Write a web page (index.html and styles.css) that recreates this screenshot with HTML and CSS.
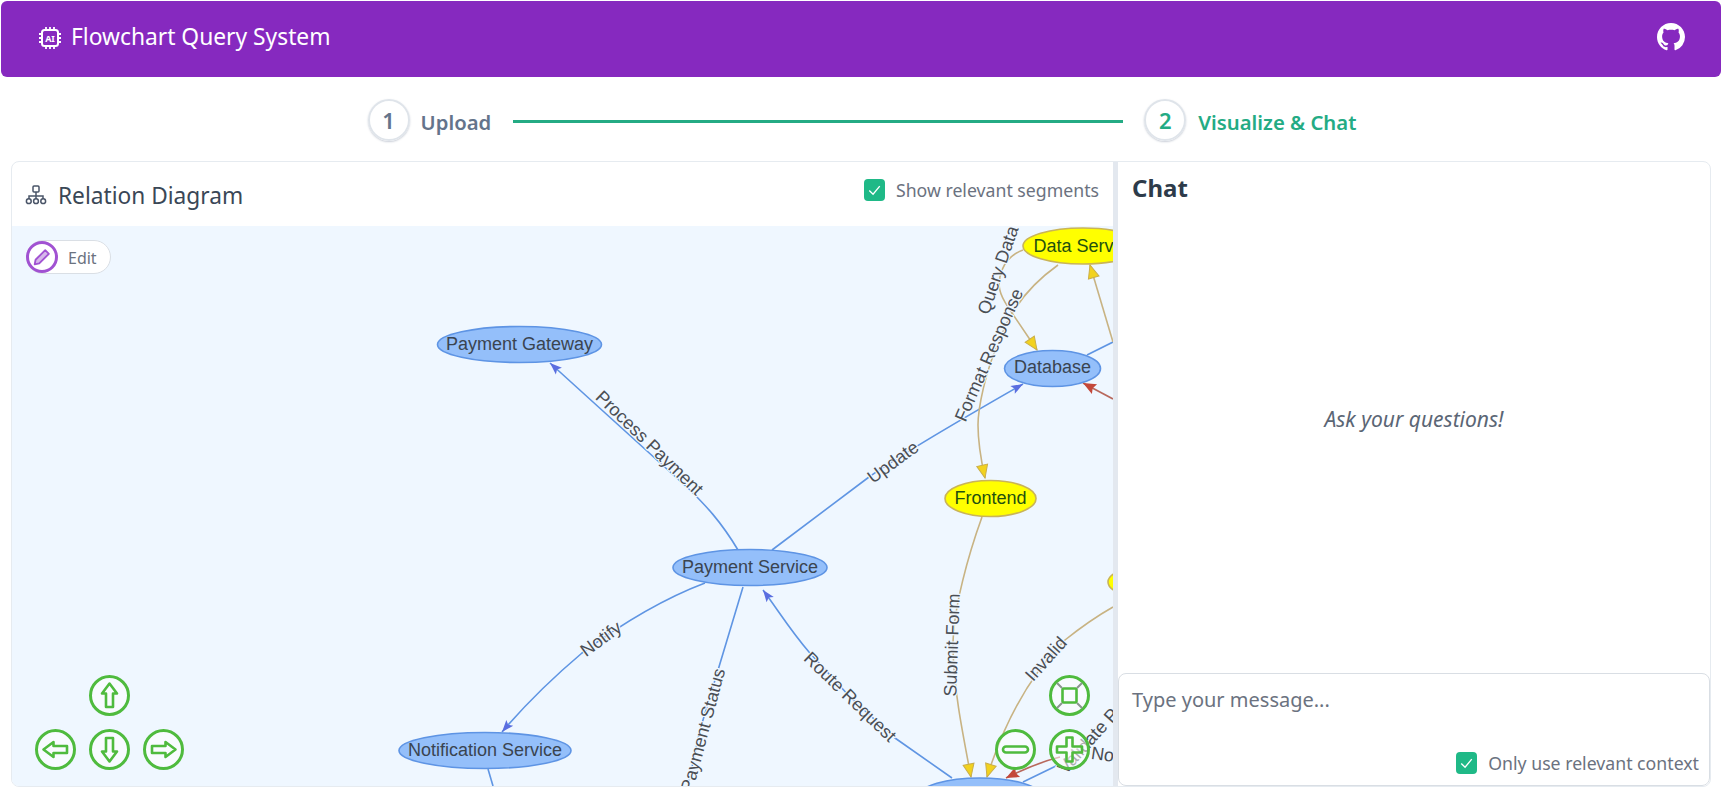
FILE: index.html
```html
<!DOCTYPE html>
<html lang="en">
<head>
<meta charset="utf-8">
<title>Flowchart Query System</title>
<link rel="stylesheet" href="styles.css">
</head>
<body>
<svg class="defs" width="0" height="0" aria-hidden="true">
  <defs>
    <marker id="head-blue" markerUnits="userSpaceOnUse" markerWidth="16" markerHeight="12" refX="14" refY="6" orient="auto"><path d="M2 1.5L14 6L2 10.5L4.5 6Z" fill="#5a6ee0"/></marker>
    <marker id="head-yellow" markerUnits="userSpaceOnUse" markerWidth="18" markerHeight="16" refX="16" refY="8" orient="auto"><path d="M3 2.5L16 8L3 13.5Z" fill="#f2d21e" stroke="#c9ae4a" stroke-width="1"/></marker>
    <marker id="head-red" markerUnits="userSpaceOnUse" markerWidth="16" markerHeight="14" refX="14" refY="7" orient="auto"><path d="M1 1.5L14 7L1 12.5L3 7Z" fill="#c4483a"/></marker>
    <symbol id="nav-arrow" viewBox="0 0 41 41">
      <circle class="nav-ring" cx="20.5" cy="20.5" r="19"/>
      <path class="nav-glyph" d="M20.5 8.5L28 18.5H24V32H17V18.5H13Z"/>
    </symbol>
  </defs>
</svg>

<header class="app-header">
  <div class="brand">
    <svg class="chip" viewBox="0 0 24 24" aria-hidden="true">
      <rect x="4" y="4" width="16" height="16" rx="2.5" fill="none" stroke="#fff" stroke-width="2"/>
      <path d="M8 1v3M12 1v3M16 1v3M8 20v3M12 20v3M16 20v3M1 8h3M1 12h3M1 16h3M20 8h3M20 12h3M20 16h3" stroke="#fff" stroke-width="1.8" fill="none"/>
      <text x="12" y="15.6" text-anchor="middle" class="chip-text">AI</text>
    </svg>
    <span class="brand-name">Flowchart Query System</span>
  </div>
  <svg class="github" viewBox="0 0 16 16" aria-hidden="true"><path fill="#fff" d="M8 0C3.58 0 0 3.58 0 8c0 3.54 2.29 6.53 5.47 7.59.4.07.55-.17.55-.38 0-.19-.01-.82-.01-1.49-2.01.37-2.53-.49-2.69-.94-.09-.23-.48-.94-.82-1.13-.28-.15-.68-.52-.01-.53.63-.01 1.08.58 1.23.82.72 1.21 1.87.87 2.33.66.07-.52.28-.87.51-1.07-1.78-.2-3.64-.89-3.64-3.95 0-.87.31-1.59.82-2.15-.08-.2-.36-1.02.08-2.12 0 0 .67-.21 2.2.82.64-.18 1.32-.27 2-.27.68 0 1.36.09 2 .27 1.53-1.04 2.2-.82 2.2-.82.44 1.1.16 1.92.08 2.12.51.56.82 1.27.82 2.15 0 3.07-1.87 3.75-3.65 3.95.29.25.54.73.54 1.48 0 1.07-.01 1.93-.01 2.2 0 .21.15.46.55.38A8.013 8.013 0 0016 8c0-4.42-3.58-8-8-8z"/></svg>
</header>

<nav class="stepper">
  <span class="step-num">1</span>
  <span class="step-label step-first">Upload</span>
  <span class="step-line"></span>
  <span class="step-num step-active">2</span>
  <span class="step-label step-active">Visualize &amp; Chat</span>
</nav>

<main class="workspace">
  <section class="diagram-panel">
    <div class="panel-head">
      <h2 class="panel-title">
        <svg class="sitemap" viewBox="0 0 22 20" aria-hidden="true">
          <rect x="8" y="1" width="6" height="6" rx="1"/>
          <path d="M11 7v4M4 14v-3h14v3M11 11v3"/>
          <circle cx="3.8" cy="16.2" r="2.4"/><circle cx="11" cy="16.2" r="2.4"/><circle cx="18.2" cy="16.2" r="2.4"/>
        </svg>
        Relation Diagram
      </h2>
      <label class="check-row">
        <span class="check-box"><svg viewBox="0 0 22 22" aria-hidden="true"><path d="M5.5 11.5l4 4 7-8.5"/></svg></span>
        Show relevant segments
      </label>
    </div>
    <div class="canvas">
      <svg class="graph" viewBox="0 0 1101 560" aria-label="Relation diagram">
        <g transform="translate(-12 -226)">
          <g class="edge edge-blue">
            <path marker-end="url(#head-blue)" d="M738 550C720 520 705 505 690 490L550 363"/>
            <path marker-end="url(#head-blue)" d="M772 550L869 477C900 455 960 420 1023 384"/>
            <path d="M1087 355L1113 342"/>
            <path marker-end="url(#head-blue)" d="M705 583C660 600 620 625 582 653C550 680 525 705 502 732"/>
            <path d="M743 587L700 730L688 786"/>
            <path marker-end="url(#head-blue)" d="M952 778L895 738L850 697L809 652C790 630 778 610 763 590"/>
            <path d="M1023 782L1058 765"/>
            <path d="M488 769L493 786"/>
          </g>
          <g class="edge edge-tan">
            <path marker-end="url(#head-yellow)" d="M1058 265C1030 285 1010 310 1000 340C985 370 978 410 978 425C978 445 981 460 985 478"/>
            <path marker-end="url(#head-yellow)" d="M1023 250C1012 254 1006 260 1002 270C996 285 1000 295 1008 307L1037 350"/>
            <path marker-end="url(#head-yellow)" d="M1113 342L1090 265"/>
            <path marker-end="url(#head-yellow)" d="M982 517C970 550 952 610 953 650C954 690 962 730 971 777"/>
            <path marker-end="url(#head-yellow)" d="M1113 607C1090 620 1075 632 1065 640C1030 675 1005 720 987 777"/>
          </g>
          <g class="edge edge-red">
            <path marker-end="url(#head-red)" d="M1113 399L1083 383"/>
            <path marker-end="url(#head-red)" d="M1060 757C1040 762 1022 770 1006 778"/>
          </g>

          <g class="node node-blue">
            <ellipse cx="519.5" cy="344.5" rx="82" ry="18"/>
            <ellipse cx="750" cy="567.5" rx="77" ry="18"/>
            <ellipse cx="485" cy="750.5" rx="86" ry="18"/>
            <ellipse cx="1052.5" cy="368.5" rx="48" ry="18"/>
            <ellipse cx="980" cy="796" rx="61" ry="18"/>
          </g>
          <g class="node node-yellow">
            <ellipse cx="1083" cy="246" rx="60" ry="18"/>
            <ellipse cx="990.5" cy="498.5" rx="45.5" ry="18"/>
            <ellipse cx="1160" cy="582" rx="52" ry="18"/>
          </g>

          <g class="node-text">
            <text x="519.5" y="349.5">Payment Gateway</text>
            <text x="750" y="573">Payment Service</text>
            <text x="485" y="756">Notification Service</text>
            <text x="1052.5" y="373">Database</text>
          </g>
          <g class="node-text node-text-yellow">
            <text x="1085" y="251.5">Data Service</text>
            <text x="990.5" y="504">Frontend</text>
          </g>

          <g class="edge-text">
            <text transform="translate(649.5 443) rotate(44)" y="6">Process Payment</text>
            <text transform="translate(893 462) rotate(-36)" y="6">Update</text>
            <text transform="translate(601 639) rotate(-36)" y="6">Notify</text>
            <text transform="translate(703 730) rotate(-75)" y="6">Payment Status</text>
            <text transform="translate(850 697) rotate(44)" y="6">Route Request</text>
            <text transform="translate(989 355) rotate(-66)" y="6">Format Response</text>
            <text transform="translate(998 270) rotate(-71)" y="6">Query Data</text>
            <text transform="translate(952 645) rotate(-88)" y="6">Submit Form</text>
            <text transform="translate(1046 659) rotate(-48)" y="6">Invalid</text>
            <text transform="translate(1108 719) rotate(-48)" y="6">Validate Payment</text>
            <text transform="translate(1114 756) rotate(8)" y="6">Notify</text>
          </g>
        </g>
      </svg>

      <button class="edit-pill" type="button">
        <span class="edit-icon"><svg viewBox="0 0 24 24" aria-hidden="true"><path d="M15.5 4.5l4 4L9 19l-5 1 1-5Z"/></svg></span>
        Edit
      </button>

      <div class="nav-cluster nav-move">
        <svg class="nav-btn slot-up"><use href="#nav-arrow"/></svg>
        <svg class="nav-btn slot-left turn-left"><use href="#nav-arrow"/></svg>
        <svg class="nav-btn slot-down turn-down"><use href="#nav-arrow"/></svg>
        <svg class="nav-btn slot-right turn-right"><use href="#nav-arrow"/></svg>
      </div>
      <div class="nav-cluster nav-zoom">
        <svg class="nav-btn slot-fit" viewBox="0 0 41 41">
          <circle class="nav-ring" cx="20.5" cy="20.5" r="19"/>
          <rect class="nav-fit" x="13.5" y="13.5" width="14" height="14" rx="1"/>
          <path class="nav-corner" d="M13 13L8 8M28 13L33 8M13 28L8 33M28 28L33 33"/>
        </svg>
        <svg class="nav-btn slot-minus" viewBox="0 0 41 41">
          <circle class="nav-ring" cx="20.5" cy="20.5" r="19"/>
          <rect class="nav-glyph" x="8" y="17.5" width="25" height="6" rx="3"/>
        </svg>
        <svg class="nav-btn slot-plus" viewBox="0 0 41 41">
          <circle class="nav-ring" cx="20.5" cy="20.5" r="19"/>
          <path class="nav-glyph" d="M17.5 8.5h6v9h9.5v6h-9.5v9h-6v-9H8v-6h9.5Z"/>
        </svg>
      </div>
    </div>
  </section>

  <div class="divider"></div>

  <section class="chat-panel">
    <h2 class="chat-title">Chat</h2>
    <div class="chat-body"><em class="chat-hint">Ask your questions!</em></div>
    <form class="composer">
      <textarea class="composer-input" placeholder="Type your message..."></textarea>
      <label class="check-row composer-check">
        <span class="check-box"><svg viewBox="0 0 22 22" aria-hidden="true"><path d="M5.5 11.5l4 4 7-8.5"/></svg></span>
        Only use relevant context
      </label>
    </form>
  </section>
</main>
</body>
</html>
```

FILE: styles.css
```css
* { box-sizing: border-box; }

html, body { margin: 0; height: 100%; }

body {
  background: #fff;
  color: #2d3748;
  font-family: "Noto Sans", "Open Sans", sans-serif;
  overflow: hidden;
}

.defs { position: absolute; }

/* Header */
.app-header {
  display: flex;
  align-items: center;
  justify-content: space-between;
  height: 76px;
  margin: 1px 1px 0;
  padding: 0 36px 5px 37px;
  background: #8629bf;
  border-radius: 6px;
  color: #fff;
}

.brand { display: flex; align-items: center; gap: 9px; padding-top: 2px; }
.chip { width: 24px; height: 24px; flex: none; }
.chip-text {
  fill: #fff;
  font-family: "Noto Sans", sans-serif;
  font-size: 9px;
  font-weight: 700;
  text-anchor: middle;
}
.brand-name { font-size: 22.8px; line-height: 1; }
.github { width: 28px; height: 28px; flex: none; }

/* Stepper */
.stepper {
  display: flex;
  align-items: center;
  justify-content: center;
  height: 84px;
  padding: 2px 0 0 2px;
  font-size: 20.3px;
  font-weight: 600;
  color: #64748b;
}

.step-num {
  display: flex;
  align-items: center;
  justify-content: center;
  width: 42px;
  height: 42px;
  margin-right: 12px;
  border: 2px solid #dfe4ea;
  border-radius: 50%;
  box-shadow: 0 1px 2px rgba(100, 116, 139, .35);
  font-size: 22px;
  font-weight: 600;
}
.step-label { line-height: 1; margin-top: 4px; }
.step-first { margin-left: -1px; }
.step-line {
  width: 610px;
  height: 3px;
  margin: 2px 21px 0 22px;
  background: #24ab84;
}
.step-active { color: #24ab84; }

/* Workspace */
.workspace {
  display: flex;
  height: 626px;
  margin: 0 11px;
  border: 1px solid #e6ebf0;
  border-radius: 8px;
  overflow: hidden;
}

.diagram-panel {
  display: flex;
  flex-direction: column;
  width: 1101px;
  flex: none;
}

.panel-head {
  display: flex;
  align-items: center;
  justify-content: space-between;
  height: 64px;
  padding: 0 14px 0 13px;
}

.panel-title {
  display: flex;
  align-items: center;
  gap: 11px;
  margin: 0;
  padding-top: 2px;
  font-size: 22.7px;
  font-weight: 400;
  color: #3a4756;
}
.sitemap {
  width: 22px;
  height: 20px;
  fill: none;
  stroke: #4a5568;
  stroke-width: 1.5;
}

.check-row {
  display: flex;
  align-items: center;
  gap: 11px;
  font-size: 17.7px;
  color: #6b7280;
}
.panel-head .check-row { margin-top: -9px; }
.check-box {
  display: block;
  width: 21px;
  height: 22px;
  border-radius: 4px;
  background: #1fb987;
}
.check-box svg {
  display: block;
  width: 21px;
  height: 22px;
  fill: none;
  stroke: #fff;
  stroke-width: 1.4;
}

/* Canvas */
.canvas {
  position: relative;
  flex: 1;
  background: #eff7ff;
  overflow: hidden;
}
.graph {
  position: absolute;
  inset: 0;
  width: 100%;
  height: 100%;
}

.edge { fill: none; stroke-width: 1.6; }
.edge-blue { stroke: #5f95e3; }
.edge-tan { stroke: #c8b383; }
.edge-red { stroke: #b8685c; }

.node ellipse { stroke-width: 1.6; }
.node-blue ellipse { fill: #94bffa; stroke: #5e94e4; }
.node-yellow ellipse { fill: #ffff00; stroke: #c9b458; }

.node-text text {
  font-family: "Liberation Sans", Arial, sans-serif;
  font-size: 18px;
  text-anchor: middle;
  fill: #3a4450;
}
.node-text-yellow text { fill: #22500f; }

.edge-text text {
  font-family: "Liberation Sans", Arial, sans-serif;
  font-size: 18px;
  text-anchor: middle;
  fill: #4a4e54;
  stroke: #eff7ff;
  stroke-width: 2.4px;
  paint-order: stroke;
}

/* Edit */
.edit-pill {
  position: absolute;
  top: 14px;
  left: 14px;
  display: flex;
  align-items: center;
  gap: 10px;
  width: 85px;
  height: 34px;
  padding: 1px 0 0 1px;
  background: #fff;
  border: 1px solid #dadfe5;
  border-radius: 17px;
  font-family: inherit;
  font-size: 16px;
  color: #6b7280;
}
.edit-icon {
  display: flex;
  align-items: center;
  justify-content: center;
  width: 32px;
  height: 32px;
  margin: -1px 0 0 -2px;
  border: 3px solid #a152d2;
  border-radius: 50%;
  background: #fff;
}
.edit-icon svg {
  width: 22px;
  height: 22px;
  fill: #d6b8ea;
  stroke: #a152d2;
  stroke-width: 2;
  stroke-linejoin: round;
}

/* Navigation buttons */
.nav-cluster {
  position: absolute;
  display: grid;
  grid-template-columns: repeat(3, 41px);
  grid-template-rows: repeat(2, 41px);
  column-gap: 13px;
  row-gap: 13px;
}
.nav-move { left: 23px; top: 449px; }
.nav-zoom { left: 983px; top: 449px; grid-template-columns: repeat(2, 41px); }

.nav-btn { width: 41px; height: 41px; }
.nav-btn use { fill: none; }
.nav-ring {
  fill: rgba(255, 255, 255, .55);
  stroke: #4fbb3e;
  stroke-width: 3;
}
.nav-glyph {
  fill: rgba(255, 255, 255, .35);
  stroke: #4fbb3e;
  stroke-width: 2.6;
  stroke-linejoin: round;
}
.nav-fit { fill: none; stroke: #4fbb3e; stroke-width: 2.6; }
.nav-corner { fill: none; stroke: #8b9490; stroke-width: 2; }

.slot-up { grid-column: 2; grid-row: 1; }
.slot-left { grid-column: 1; grid-row: 2; }
.slot-down { grid-column: 2; grid-row: 2; }
.slot-right { grid-column: 3; grid-row: 2; }
.slot-fit { grid-column: 2; grid-row: 1; }
.slot-minus { grid-column: 1; grid-row: 2; }
.slot-plus { grid-column: 2; grid-row: 2; }
.turn-left { transform: rotate(-90deg); }
.turn-down { transform: rotate(180deg); }
.turn-right { transform: rotate(90deg); }

.divider { width: 5px; flex: none; background: #e3e8ef; }

/* Chat */
.chat-panel {
  display: flex;
  flex-direction: column;
  flex: 1;
  min-width: 0;
}
.chat-title {
  height: 56px;
  margin: 0;
  padding: 9px 0 0 14px;
  font-size: 24px;
  font-weight: 700;
  color: #2d3b4a;
}
.chat-body {
  display: flex;
  flex: 1;
  align-items: center;
  justify-content: center;
  padding-bottom: 54px;
}
.chat-hint { font-size: 21px; color: #5b6675; }

.composer {
  display: flex;
  flex-direction: column;
  height: 113px;
  border: 1px solid #d9dee4;
  border-radius: 8px;
  background: #fff;
}
.composer-input {
  flex: 1;
  padding: 12px 13px 0;
  border: 0;
  outline: 0;
  resize: none;
  background: transparent;
  font-family: inherit;
  font-size: 20px;
  color: #2d3748;
}
.composer-input::placeholder { color: #6b7280; opacity: 1; }
.composer-check { justify-content: flex-end; padding: 0 10px 10px 0; }
```
